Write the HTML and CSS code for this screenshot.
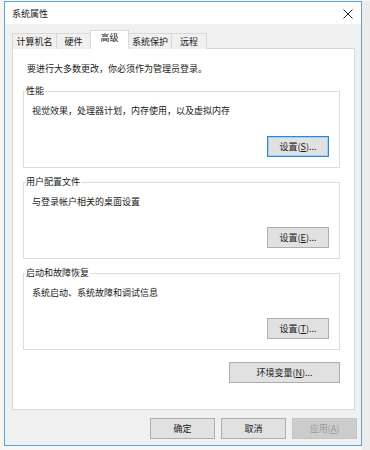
FILE: index.html
```html
<!DOCTYPE html>
<html>

<head>
    <title>系统属性</title>
    <link rel="stylesheet" href="styles.css">
</head>

<body>
    <div class="desk">
        <div class="edge-left"></div>

        <!-- Dialog window -->
        <div class="window">
            <div class="titlebar">
                <span class="title">系统属性</span>
                <svg class="close" width="10" height="10" viewBox="0 0 10 10">
                    <path d="M0.5 0.5 L9.5 9.5 M9.5 0.5 L0.5 9.5" stroke="#222" stroke-width="1" fill="none" />
                </svg>
            </div>

            <div class="body">
                <!-- Tabs -->
                <div class="tabs">
                    <div class="tab w1">计算机名</div>
                    <div class="tab w2">硬件</div>
                    <div class="tab w3 active">高级</div>
                    <div class="tab w4">系统保护</div>
                    <div class="tab w5">远程</div>
                </div>

                <div class="panel">
                    <p class="note">要进行大多数更改，你必须作为管理员登录。</p>

                    <div class="groups">
                        <fieldset class="group">
                            <legend>性能</legend>
                            <p class="desc">视觉效果，处理器计划，内存使用，以及虚拟内存</p>
                            <div class="row">
                                <button class="btn small focused">设置(<u>S</u>)...</button>
                            </div>
                        </fieldset>

                        <fieldset class="group">
                            <legend>用户配置文件</legend>
                            <p class="desc">与登录帐户相关的桌面设置</p>
                            <div class="row">
                                <button class="btn small">设置(<u>E</u>)...</button>
                            </div>
                        </fieldset>

                        <fieldset class="group">
                            <legend>启动和故障恢复</legend>
                            <p class="desc">系统启动、系统故障和调试信息</p>
                            <div class="row">
                                <button class="btn small">设置(<u>T</u>)...</button>
                            </div>
                        </fieldset>

                        <div class="row env-row">
                            <button class="btn wide">环境变量(<u>N</u>)...</button>
                        </div>
                    </div>
                </div>
            </div>

            <!-- Dialog buttons -->
            <div class="footer">
                <button class="btn action">确定</button>
                <button class="btn action">取消</button>
                <button class="btn action" disabled>应用(<u>A</u>)</button>
            </div>
        </div>

        <div class="edge-right"></div>
    </div>
</body>
</html>
```

FILE: styles.css
```css
body {
    margin: 0;
    background: #f7f7f7;
    font-family: "Noto Sans CJK SC", "Noto Sans", sans-serif;
    font-size: 9px;
    color: #1a1a1a;
}

.desk {
    display: flex;
    padding-top: 1px;
    height: 449px;
}

.edge-left {
    width: 4px;
    background: #f5f5f5;
}

.edge-right {
    flex: 1;
    background: #ececec;
}

/* The dialog itself */
.window {
    width: 358px;
    height: 445px;
    box-sizing: border-box;
    border: 1px solid #5aa6da;
    background: #f0f0f0;
    display: flex;
    flex-direction: column;
}

.titlebar {
    height: 22px;
    background: #fff;
    display: flex;
    align-items: center;
    justify-content: space-between;
    padding: 0 8px 0 7px;
}

.title {
    line-height: 12px;
    margin-top: 2px;
}

.close {
    display: block;
    margin-top: 2px;
}

.body {
    padding: 7px 6px 0 7px;
}

/* Tab strip */
.tabs {
    display: flex;
    align-items: flex-end;
    height: 18px;
    margin-bottom: -1px;
    position: relative;
    z-index: 1;
}

.tab {
    height: 16px;
    line-height: 16px;
    box-sizing: border-box;
    border: 1px solid #d9d9d9;
    border-bottom: none;
    margin-right: -1px;
    text-align: center;
    background: #f0f0f0;
}

.tab.active {
    height: 19px;
    line-height: 14px;
    background: #fff;
    position: relative;
    z-index: 2;
}

.w1 { width: 45px; }
.w2 { width: 35px; }
.w3 { width: 39px; }
.w4 { width: 44px; }
.w5 { width: 36px; }

.panel {
    height: 362px;
    box-sizing: border-box;
    border: 1px solid #d9d9d9;
    background: #fff;
}

.note {
    margin: 0;
    padding: 14px 0 0 14px;
    line-height: 12px;
}

.groups {
    padding: 0 14px 0 10px;
}

.group {
    margin: 10px 0 0;
    padding: 8px 10px 10px 8px;
    border: 1px solid #dcdcdc;
    min-width: 0;
}

.group + .group {
    margin-top: 8px;
}

.group legend {
    padding: 0 1px;
    margin-left: -7px;
    line-height: 12px;
}

.desc {
    margin: 0;
    line-height: 12px;
}

.row {
    display: flex;
    justify-content: flex-end;
    margin-top: 19px;
}

.env-row {
    margin-top: 12px;
}

/* Buttons */
.btn {
    height: 21px;
    box-sizing: border-box;
    border: 1px solid #adadad;
    background: #e1e1e1;
    font-family: inherit;
    font-size: 9px;
    color: #1a1a1a;
    padding: 0;
    line-height: 19px;
}

.btn.small {
    width: 62px;
}

.btn.wide {
    width: 111px;
}

.btn.focused {
    border-color: #2b86d6;
    box-shadow: inset 0 0 0 1px #a9cdee;
}

.footer {
    display: flex;
    justify-content: flex-end;
    gap: 6px;
    padding: 8px 4px 0 0;
}

.btn.action {
    width: 65px;
}

.btn:disabled {
    background: #cccccc;
    border-color: #c4c4c4;
    color: #9a9a9a;
}
```
